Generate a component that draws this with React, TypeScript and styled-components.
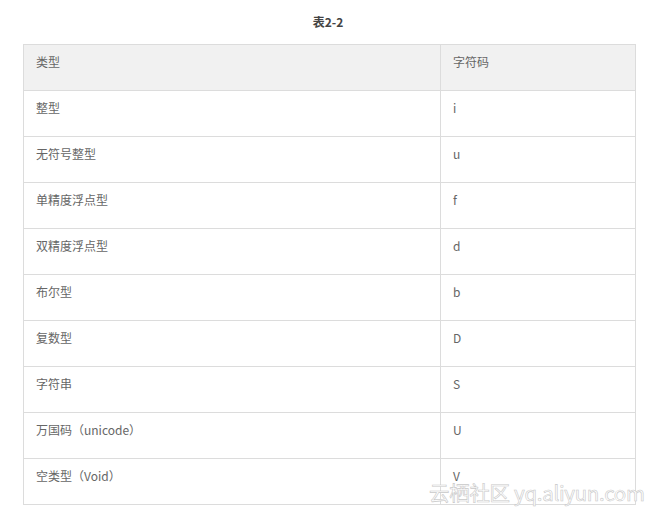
import React from "react";
import styled, { createGlobalStyle } from "styled-components";

const Global = createGlobalStyle`
  html, body { margin: 0; padding: 0; background: #fff; }
  body { font-family: "Noto Sans CJK SC", "Noto Sans", sans-serif; }
`;

const Page = styled.div`
  position: relative;
  width: 654px;
  height: 514px;
  overflow: hidden;
  background: #fff;
`;

const Caption = styled.div`
  padding-top: 12px;
  height: 20px;
  line-height: 20px;
  text-align: center;
  font-size: 12px;
  font-weight: bold;
  color: #444;
  margin-bottom: 12px;
  padding-left: 2px;
`;

const Table = styled.table`
  margin-left: 23px;
  width: 612px;
  border-collapse: collapse;
  table-layout: fixed;
  border: 1px solid #dcdcdc;
`;

const Row = styled.tr<{ $head?: boolean }>`
  background: ${(p) => (p.$head ? "#f1f1f1" : "#fff")};
`;

const Cell = styled.td`
  height: 46px;
  box-sizing: border-box;
  border: 1px solid #dcdcdc;
  padding: 8px 12px 0 12px;
  vertical-align: top;
  font-size: 12px;
  line-height: 18px;
  color: #666;
`;

const Watermark = styled.div`
  position: absolute;
  left: 429px;
  top: 479px;
  font-family: "Noto Sans CJK SC", "Liberation Sans", sans-serif;
  font-size: 20.5px;
  line-height: 26px;
  color: #fff;
  letter-spacing: -0.3px;
  -webkit-text-stroke: 0.6px #c8c8c8;
  white-space: nowrap;
`;

const rows: [string, string][] = [
  ["整型", "i"],
  ["无符号整型", "u"],
  ["单精度浮点型", "f"],
  ["双精度浮点型", "d"],
  ["布尔型", "b"],
  ["复数型", "D"],
  ["字符串", "S"],
  ["万国码（unicode）", "U"],
  ["空类型（Void）", "V"],
];

export default function App() {
  return (
    <Page>
      <Global />
      <Caption>表2-2</Caption>
      <Table>
        <colgroup>
          <col style={{ width: 417 }} />
          <col style={{ width: 195 }} />
        </colgroup>
        <tbody>
          <Row $head>
            <Cell>类型</Cell>
            <Cell>字符码</Cell>
          </Row>
          {rows.map(([a, b]) => (
            <Row key={a}>
              <Cell>{a}</Cell>
              <Cell>{b}</Cell>
            </Row>
          ))}
        </tbody>
      </Table>
      <Watermark>云栖社区 yq.aliyun.com</Watermark>
    </Page>
  );
}
